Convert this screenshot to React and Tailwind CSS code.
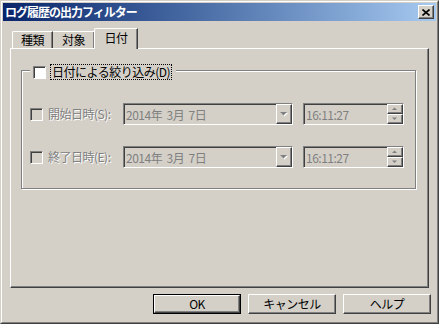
import React from 'react';

// classic Windows 3D borders
const raised =
  'border border-t-white border-l-white border-r-[#404040] border-b-[#404040] shadow-[inset_-1px_-1px_0_#808080]';
const sunken =
  'border border-t-[#808080] border-l-[#808080] border-r-white border-b-white shadow-[inset_1px_1px_0_#404040]';
const disabledText = 'text-[#808080] [text-shadow:1px_1px_0_#ffffff]';

const CheckBox = ({ enabled }) => (
  <div className={`w-[13px] h-[13px] shrink-0 ${sunken} ${enabled ? 'bg-white' : 'bg-[#d4d0c8]'}`} />
);

const DownArrow = () => (
  <svg width="8" height="5" viewBox="0 0 8 5">
    <path d="M1 1h7L4.5 4.5z" fill="#ffffff" />
    <path d="M0 0h7L3.5 3.5z" fill="#808080" />
  </svg>
);

const SpinArrow = ({ up }) => (
  <svg width="6" height="4" viewBox="0 0 6 4">
    {up ? <path d="M0 3h5L2.5 0.5z" fill="#808080" /> : <path d="M0 0.5h5L2.5 3z" fill="#808080" />}
  </svg>
);

const DateRow = ({ label }) => (
  <div className="flex items-center h-[22px]">
    <div className="pl-[8px]">
      <CheckBox enabled={false} />
    </div>
    <div className={`ml-[5px] w-[75px] ${disabledText}`}>{label}</div>
    {/* date combo */}
    <div className={`w-[170px] h-[22px] flex ${sunken} bg-[#d4d0c8]`}>
      <div className="flex-1 flex items-center pl-[2px] pt-px text-[#808080] whitespace-pre">2014年  3月  7日</div>
      <div className={`w-[16px] h-full flex items-center justify-center bg-[#d4d0c8] ${raised}`}>
        <DownArrow />
      </div>
    </div>
    {/* time field */}
    <div className={`ml-[10px] w-[101px] h-[22px] flex ${sunken} bg-[#d4d0c8]`}>
      <div className="flex-1 flex items-center pl-[2px] pt-px text-[#808080]">16:11:27</div>
      <div className="w-[16px] h-full flex flex-col">
        <div className={`flex-1 flex items-center justify-center ${raised}`}>
          <SpinArrow up />
        </div>
        <div className={`flex-1 flex items-center justify-center ${raised}`}>
          <SpinArrow />
        </div>
      </div>
    </div>
  </div>
);

const Button = ({ children, isDefault }) => (
  <div className={`w-[88px] h-[20px] ${isDefault ? 'border border-black' : ''}`}>
    <div className={`w-full h-full flex items-center justify-center ${raised}`}>{children}</div>
  </div>
);

export default function App() {
  return (
    <div className="w-[439px] h-[324px] bg-[#d4d0c8] border border-t-[#d4d0c8] border-l-[#d4d0c8] border-r-[#404040] border-b-[#404040] text-[12px] leading-none text-black font-['Noto_Sans_CJK_JP','Liberation_Sans',sans-serif] tracking-[-0.5px] select-none">
      <div className="h-full border border-t-white border-l-white border-r-[#808080] border-b-[#808080] p-px flex flex-col">
        {/* Title bar */}
        <div className="h-[18px] shrink-0 flex items-center justify-between bg-linear-to-r from-[#0a246a] to-[#a6caf0] pl-[2px] pr-[2px]">
          <span className="text-white font-bold tracking-[-1px]">ログ履歴の出力フィルター</span>
          <div className={`w-[16px] h-[14px] bg-[#d4d0c8] flex items-center justify-center ${raised}`}>
            <svg width="8" height="7" viewBox="0 0 8 7">
              <path d="M0.5 0.5L7.5 6.5M7.5 0.5L0.5 6.5" stroke="#000" strokeWidth="1.6" />
            </svg>
          </div>
        </div>

        {/* Body */}
        <div className="flex-1 px-[7px] pt-[7px] flex flex-col">
          {/* Tabs */}
          <div className="flex items-end h-[21px] -mb-px relative z-10 pl-[2px]">
            <div className={`w-[41px] h-[17px] mb-px flex items-center justify-center border-t border-l border-white rounded-tl-[2px] shadow-[inset_-1px_0_0_#808080] border-r border-r-[#404040]`}>
              種類
            </div>
            <div className={`w-[42px] h-[17px] mb-px flex items-center justify-center border-t border-white shadow-[inset_-1px_0_0_#808080] border-r border-r-[#404040]`}>
              対象
            </div>
            <div className="w-[44px] h-[21px] -ml-[1px] bg-[#d4d0c8] flex items-center justify-center pb-[2px] border-t border-l border-white rounded-tl-[2px] border-r border-r-[#404040] shadow-[inset_-1px_0_0_#808080]">
              日付
            </div>
          </div>

          {/* Tab pane */}
          <div className={`h-[240px] shrink-0 ${raised}`}>
            <div className="ml-[10px] mt-[21px] w-[395px] h-[119px] border border-[#808080] shadow-[inset_1px_1px_0_#ffffff,1px_1px_0_#ffffff] relative pt-[32px]">
              {/* group legend */}
              <div className="absolute left-[8px] top-[-7px] h-[16px] w-[146px] bg-[#d4d0c8] flex items-center pl-[3px]">
                <CheckBox enabled />
                <div className="ml-[4px] h-[16px] px-px flex items-center border border-dotted border-black">
                  日付による絞り込み(D)
                </div>
              </div>
              <div className="flex flex-col gap-[21px]">
                <DateRow label="開始日時(S):" />
                <DateRow label="終了日時(E):" />
              </div>
            </div>
          </div>

          {/* Buttons */}
          <div className="mt-[6px] -mr-[2px] flex justify-end gap-[7px]">
            <Button isDefault>OK</Button>
            <Button>キャンセル</Button>
            <Button>ヘルプ</Button>
          </div>
        </div>
      </div>
    </div>
  );
}
